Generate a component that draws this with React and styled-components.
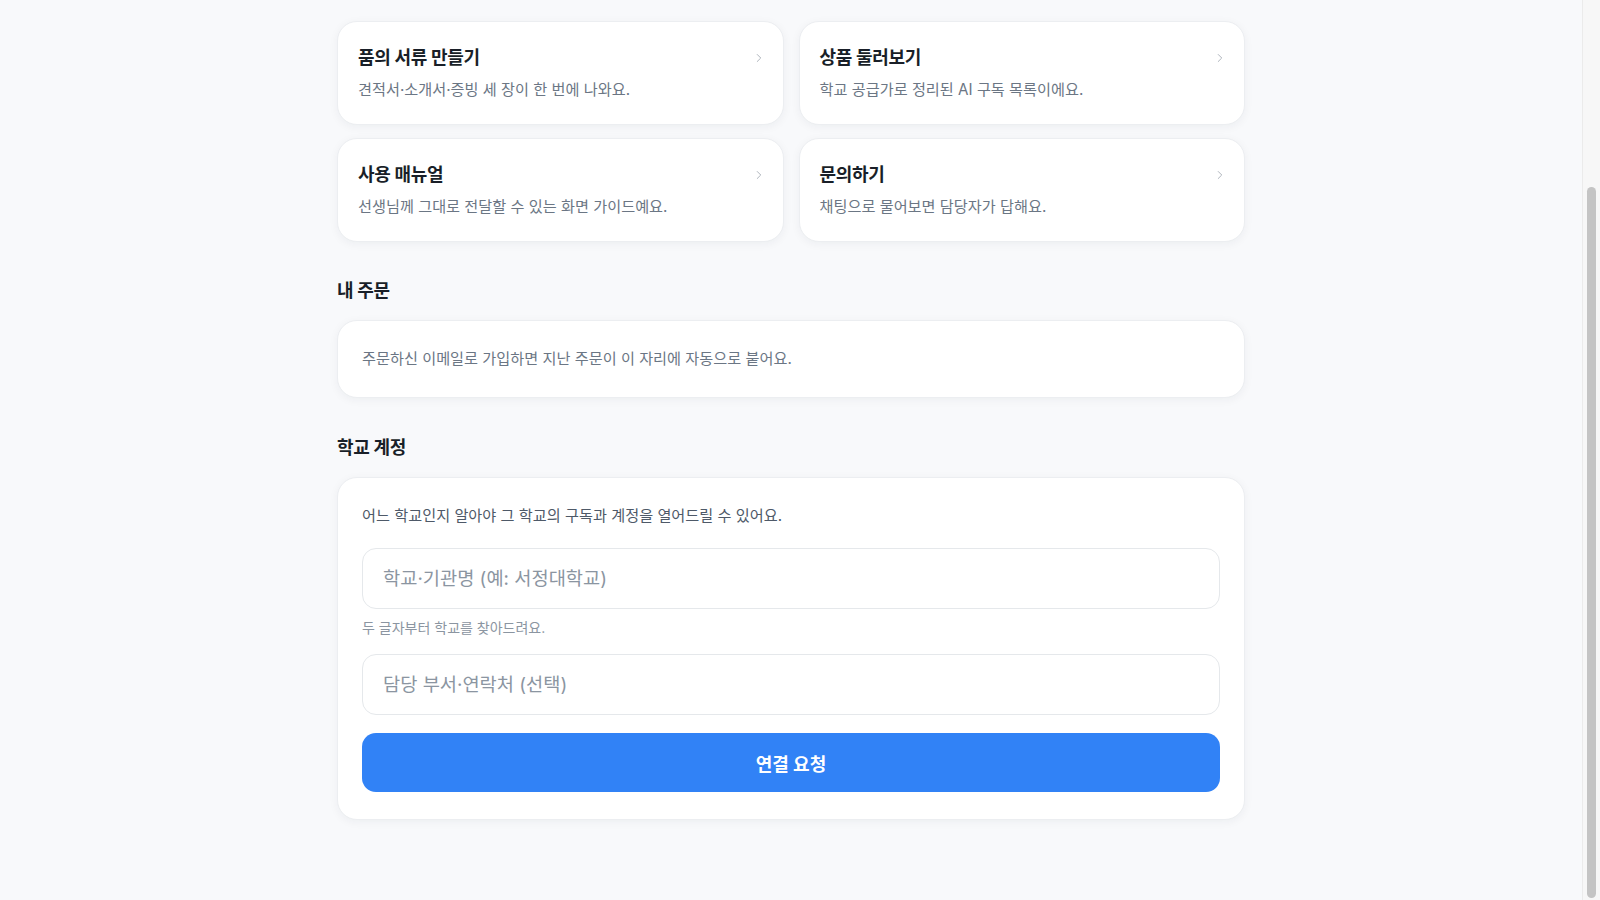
import React from 'react';
import styled, { createGlobalStyle } from 'styled-components';
import { ChevronRight } from 'lucide-react';

const GlobalStyle = createGlobalStyle`
  html {
    background: #f8f9fb;
  }
  body {
    margin: 0;
    padding-right: 18px;
    background: #f8f9fb;
    font-family: Inter, "Noto Sans CJK KR", "Noto Sans", sans-serif;
    color: #191f28;
    -webkit-font-smoothing: antialiased;
  }
  * {
    box-sizing: border-box;
  }
`;

const links = [
  { title: '품의 서류 만들기', desc: '견적서·소개서·증빙 세 장이 한 번에 나와요.' },
  { title: '상품 둘러보기', desc: '학교 공급가로 정리된 AI 구독 목록이에요.' },
  { title: '사용 매뉴얼', desc: '선생님께 그대로 전달할 수 있는 화면 가이드예요.' },
  { title: '문의하기', desc: '채팅으로 물어보면 담당자가 답해요.' },
];

const App = () => {
  return (
    <>
      <GlobalStyle />
      <Page>
        <LinkGrid>
          {links.map((item) => (
            <LinkCard key={item.title} href="#">
              <LinkText>
                <LinkTitle>{item.title}</LinkTitle>
                <LinkDesc>{item.desc}</LinkDesc>
              </LinkText>
              <Chevron>
                <ChevronRight size={14} strokeWidth={1.6} />
              </Chevron>
            </LinkCard>
          ))}
        </LinkGrid>

        <Section>
          <SectionTitle>내 주문</SectionTitle>
          <Panel $pad="26px 24px 26px">
            <MutedText>주문하신 이메일로 가입하면 지난 주문이 이 자리에 자동으로 붙어요.</MutedText>
          </Panel>
        </Section>

        <Section $gap={37}>
          <SectionTitle>학교 계정</SectionTitle>
          <Panel $pad="25px 24px 27px">
            <Intro>어느 학교인지 알아야 그 학교의 구독과 계정을 열어드릴 수 있어요.</Intro>
            <Input placeholder="학교·기관명 (예: 서정대학교)" />
            <Hint>두 글자부터 학교를 찾아드려요.</Hint>
            <Input placeholder="담당 부서·연락처 (선택)" $spaced />
            <PrimaryButton type="button">연결 요청</PrimaryButton>
          </Panel>
        </Section>
      </Page>

      {/* browser scrollbar, page is scrolled to its end */}
      <ScrollTrack>
        <ScrollThumb />
      </ScrollTrack>
    </>
  );
};

const Page = styled.main`
  max-width: 908px;
  margin: 0 auto;
  padding: 21px 0 60px;
`;

const LinkGrid = styled.div`
  display: grid;
  grid-template-columns: 1fr 1fr;
  gap: 13px 15px;
`;

const LinkCard = styled.a`
  display: flex;
  align-items: flex-start;
  justify-content: space-between;
  padding: 23px 17px 23px 20px;
  background: #fff;
  border: 1px solid #eceef1;
  border-radius: 20px;
  box-shadow: 0 2px 10px rgba(20, 30, 50, 0.05);
  text-decoration: none;
  color: inherit;
`;

const LinkText = styled.div`
  display: flex;
  flex-direction: column;
`;

const LinkTitle = styled.span`
  font-size: 18px;
  line-height: 26px;
  font-weight: 700;
  color: #191f28;
  letter-spacing: -0.3px;
`;

const LinkDesc = styled.span`
  margin-top: 8px;
  font-size: 15.2px;
  line-height: 22px;
  color: #6b7684;
`;

const Chevron = styled.span`
  display: flex;
  align-items: center;
  height: 26px;
  color: #a9afb8;
`;

const Section = styled.section`
  margin-top: ${(p) => p.$gap || 36}px;
`;

const SectionTitle = styled.h2`
  margin: 0 0 16px;
  font-size: 18px;
  line-height: 26px;
  font-weight: 700;
  color: #191f28;
  letter-spacing: -0.3px;
`;

const Panel = styled.div`
  display: flex;
  flex-direction: column;
  padding: ${(p) => p.$pad};
  background: #fff;
  border: 1px solid #eceef1;
  border-radius: 20px;
  box-shadow: 0 2px 10px rgba(20, 30, 50, 0.05);
`;

const MutedText = styled.p`
  margin: 0;
  font-size: 15.2px;
  line-height: 24px;
  color: #6b7684;
`;

const Intro = styled.p`
  margin: 0 0 19px;
  font-size: 15.2px;
  line-height: 26px;
  color: #4e5968;
`;

const Input = styled.input`
  height: 61px;
  margin-top: ${(p) => (p.$spaced ? '16px' : '0')};
  padding: 0 20px;
  border: 1px solid #e5e8eb;
  border-radius: 14px;
  background: #fff;
  font-family: inherit;
  font-size: 18.7px;
  color: #191f28;
  outline: none;

  &::placeholder {
    color: #8b95a1;
  }
`;

const Hint = styled.p`
  margin: 9px 0 0;
  font-size: 14px;
  line-height: 20px;
  color: #8b95a1;
`;

const PrimaryButton = styled.button`
  height: 59px;
  margin-top: 18px;
  border: none;
  border-radius: 14px;
  background: #3182f6;
  color: #fff;
  font-family: inherit;
  font-size: 18px;
  font-weight: 700;
  cursor: pointer;
`;

const ScrollTrack = styled.div`
  position: fixed;
  top: 0;
  right: 0;
  bottom: 0;
  width: 18px;
  background: #f7f7f7;
  border-left: 1px solid #ebebeb;
`;

const ScrollThumb = styled.div`
  position: absolute;
  top: 187px;
  bottom: 2px;
  left: 4px;
  right: 4px;
  border-radius: 5px;
  background: #c4c4c4;
`;

export default App;
